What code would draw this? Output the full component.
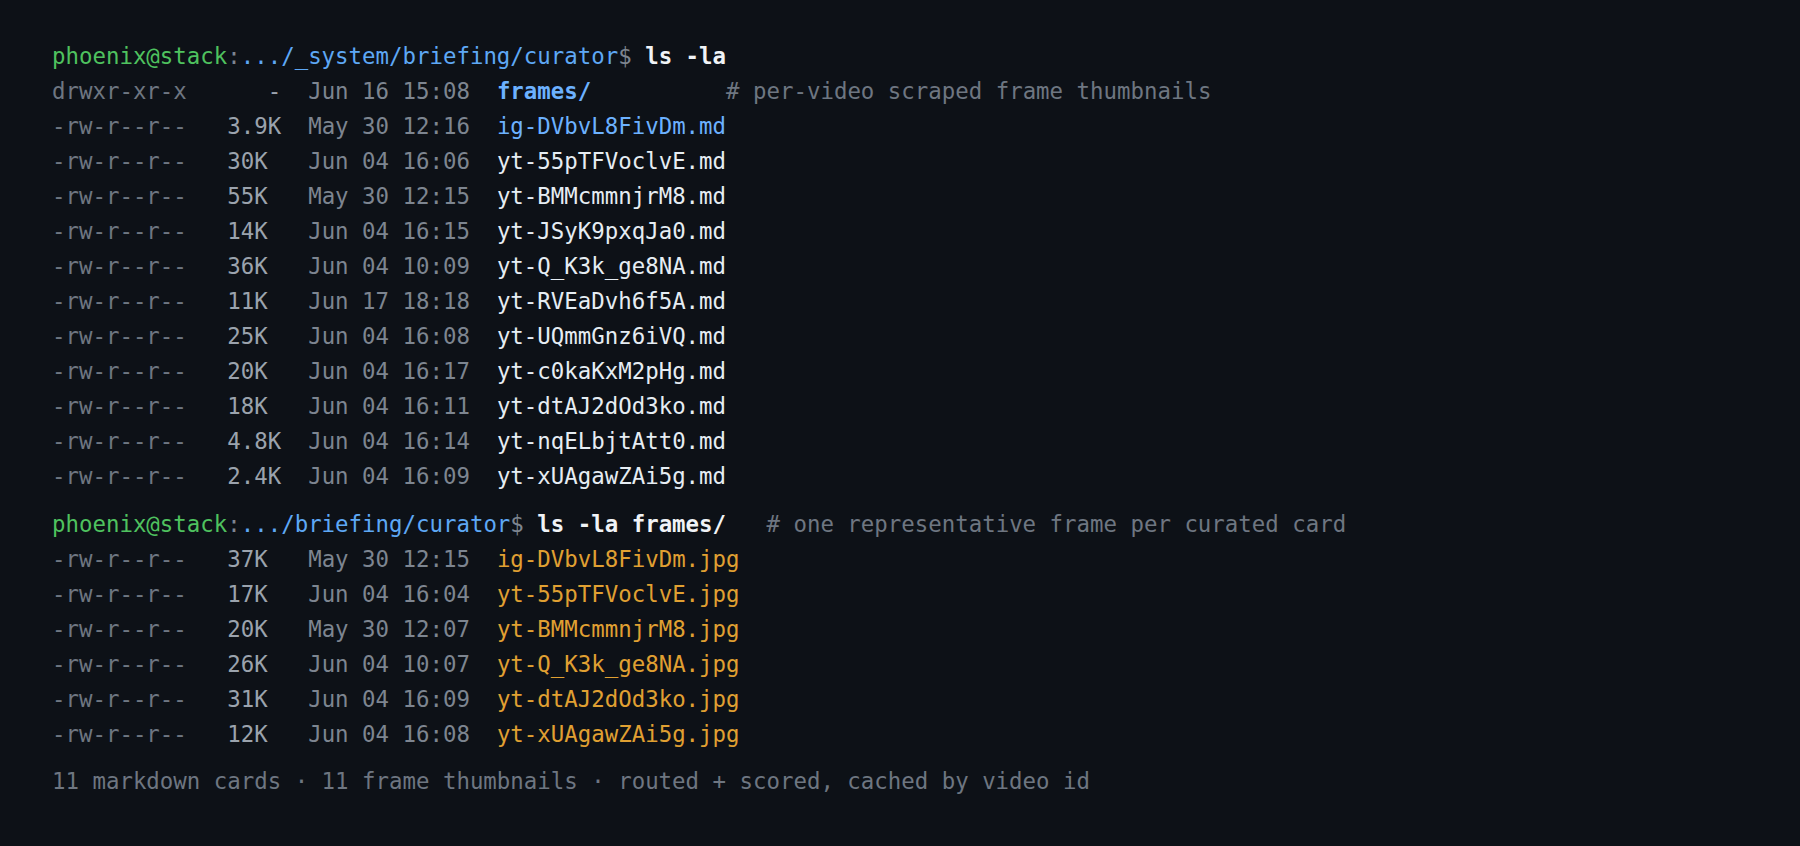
import React from 'react';

type Row = { perm: string; size: string; date: string; name: string; tone: 'blue' | 'white' | 'orange'; bold?: boolean; comment?: string };

const mdRows: Row[] = [
  { perm: 'drwxr-xr-x', size: '      -', date: 'Jun 16 15:08', name: 'frames/', tone: 'blue', bold: true, comment: '          # per-video scraped frame thumbnails' },
  { perm: '-rw-r--r--', size: '   3.9K', date: 'May 30 12:16', name: 'ig-DVbvL8FivDm.md', tone: 'blue' },
  { perm: '-rw-r--r--', size: '   30K ', date: 'Jun 04 16:06', name: 'yt-55pTFVoclvE.md', tone: 'white' },
  { perm: '-rw-r--r--', size: '   55K ', date: 'May 30 12:15', name: 'yt-BMMcmmnjrM8.md', tone: 'white' },
  { perm: '-rw-r--r--', size: '   14K ', date: 'Jun 04 16:15', name: 'yt-JSyK9pxqJa0.md', tone: 'white' },
  { perm: '-rw-r--r--', size: '   36K ', date: 'Jun 04 10:09', name: 'yt-Q_K3k_ge8NA.md', tone: 'white' },
  { perm: '-rw-r--r--', size: '   11K ', date: 'Jun 17 18:18', name: 'yt-RVEaDvh6f5A.md', tone: 'white' },
  { perm: '-rw-r--r--', size: '   25K ', date: 'Jun 04 16:08', name: 'yt-UQmmGnz6iVQ.md', tone: 'white' },
  { perm: '-rw-r--r--', size: '   20K ', date: 'Jun 04 16:17', name: 'yt-c0kaKxM2pHg.md', tone: 'white' },
  { perm: '-rw-r--r--', size: '   18K ', date: 'Jun 04 16:11', name: 'yt-dtAJ2dOd3ko.md', tone: 'white' },
  { perm: '-rw-r--r--', size: '   4.8K', date: 'Jun 04 16:14', name: 'yt-nqELbjtAtt0.md', tone: 'white' },
  { perm: '-rw-r--r--', size: '   2.4K', date: 'Jun 04 16:09', name: 'yt-xUAgawZAi5g.md', tone: 'white' },
];

const jpgRows: Row[] = [
  { perm: '-rw-r--r--', size: '   37K ', date: 'May 30 12:15', name: 'ig-DVbvL8FivDm.jpg', tone: 'orange' },
  { perm: '-rw-r--r--', size: '   17K ', date: 'Jun 04 16:04', name: 'yt-55pTFVoclvE.jpg', tone: 'orange' },
  { perm: '-rw-r--r--', size: '   20K ', date: 'May 30 12:07', name: 'yt-BMMcmmnjrM8.jpg', tone: 'orange' },
  { perm: '-rw-r--r--', size: '   26K ', date: 'Jun 04 10:07', name: 'yt-Q_K3k_ge8NA.jpg', tone: 'orange' },
  { perm: '-rw-r--r--', size: '   31K ', date: 'Jun 04 16:09', name: 'yt-dtAJ2dOd3ko.jpg', tone: 'orange' },
  { perm: '-rw-r--r--', size: '   12K ', date: 'Jun 04 16:08', name: 'yt-xUAgawZAi5g.jpg', tone: 'orange' },
];

const toneClass = {
  blue: 'text-[#6cb1ff]',
  white: 'text-[#e6edf3]',
  orange: 'text-[#e0a032]',
};

function Prompt({ path, cmd, comment }: { path: string; cmd: string; comment?: string }) {
  return (
    <div className="h-[35px] leading-[35px]">
      <span className="text-[#4fc25f]">phoenix@stack</span>
      <span className="text-[#7d8590]">:</span>
      <span className="text-[#5ea8f5]">{path}</span>
      <span className="text-[#7d8590]">$</span>
      <span className="font-bold text-[#f0f3f6]"> {cmd}</span>
      {comment && <span className="text-[#6e7681]">{comment}</span>}
    </div>
  );
}

function FileRow({ row }: { row: Row }) {
  return (
    <div className="h-[35px] leading-[35px]">
      <span className="text-[#6e7681]">{row.perm}</span>
      <span className="text-[#9ba3ad]">{row.size}</span>
      <span className="text-[#7d8590]">  {row.date}  </span>
      <span className={`${toneClass[row.tone]} ${row.bold ? 'font-bold' : ''}`}>{row.name}</span>
      {row.comment && <span className="text-[#6e7681]">{row.comment}</span>}
    </div>
  );
}

export default function App() {
  return (
    <div className="min-h-[846px] w-full bg-[#0d1117] pl-[52px] pt-[39px] font-['DejaVu_Sans_Mono',monospace] text-[22.4px] whitespace-pre">
      <Prompt path=".../_system/briefing/curator" cmd="ls -la" />
      {mdRows.map((row, i) => (
        <FileRow key={i} row={row} />
      ))}

      <div className="mt-[13px]">
        <Prompt path=".../briefing/curator" cmd="ls -la frames/" comment="   # one representative frame per curated card" />
        {jpgRows.map((row, i) => (
          <FileRow key={i} row={row} />
        ))}
      </div>

      <div className="mt-[12px] h-[35px] leading-[35px] text-[#6e7681]">
        11 markdown cards · 11 frame thumbnails · routed + scored, cached by video id
      </div>
    </div>
  );
}
